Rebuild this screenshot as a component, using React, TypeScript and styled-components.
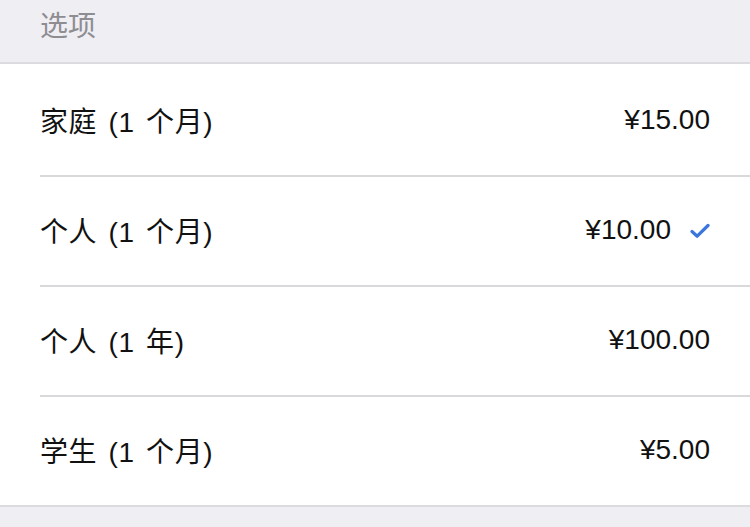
import React from 'react';
import styled, { createGlobalStyle } from 'styled-components';

const GlobalStyle = createGlobalStyle`
  html, body {
    margin: 0;
    padding: 0;
    background: #efeef2;
  }
  body {
    font-family: "Liberation Sans", "Noto Sans CJK SC", sans-serif;
    -webkit-font-smoothing: antialiased;
  }
`;

const Page = styled.div`
  width: 750px;
  height: 527px;
  background: #efeef2;
  overflow: hidden;
`;

const SectionHeader = styled.div`
  height: 64px;
  box-sizing: border-box;
  padding: 8px 40px 0;
  border-bottom: 2px solid #dcdbe0;
  color: #8d8d92;
  font-size: 28px;
  line-height: 38px;
`;

const List = styled.ul`
  list-style: none;
  margin: 0;
  padding: 3px 0 0;
  background: #ffffff;
  border-bottom: 2px solid #dcdbe0;
`;

const Row = styled.li<{ $last?: boolean }>`
  margin-left: 40px;
  padding-right: 40px;
  height: 108px;
  display: flex;
  align-items: center;
  justify-content: space-between;
  border-bottom: ${(p) => (p.$last ? 'none' : '2px solid #d9d9dc')};
  font-size: 28px;
  color: #111111;
`;

const Label = styled.span`
  padding-bottom: 3px;
  word-spacing: 3px;
  letter-spacing: 0.6px;
`;

const Right = styled.span`
  display: flex;
  align-items: center;
  gap: 19px;
  padding-bottom: 3px;
`;

const Check = styled.svg`
  width: 20px;
  height: 16px;
  margin-top: 2px;
`;

const items = [
  { name: '家庭 (1 个月)', price: '¥15.00', selected: false },
  { name: '个人 (1 个月)', price: '¥10.00', selected: true },
  { name: '个人 (1 年)', price: '¥100.00', selected: false },
  { name: '学生 (1 个月)', price: '¥5.00', selected: false },
];

const App: React.FC = (): JSX.Element => {
  return (
    <Page>
      <GlobalStyle />
      <SectionHeader>选项</SectionHeader>
      <List>
        {items.map((item, i) => (
          <Row key={item.name + item.price} $last={i === items.length - 1}>
            <Label>{item.name}</Label>
            <Right>
              <span>{item.price}</span>
              {item.selected && (
                <Check viewBox="0 0 20 16">
                  <path d="M2 8.5 L7.2 13.2 L18 2.5" fill="none" stroke="#3b76dc" strokeWidth="3.2" strokeLinecap="round" strokeLinejoin="round" />
                </Check>
              )}
            </Right>
          </Row>
        ))}
      </List>
    </Page>
  );
};

export default App;
